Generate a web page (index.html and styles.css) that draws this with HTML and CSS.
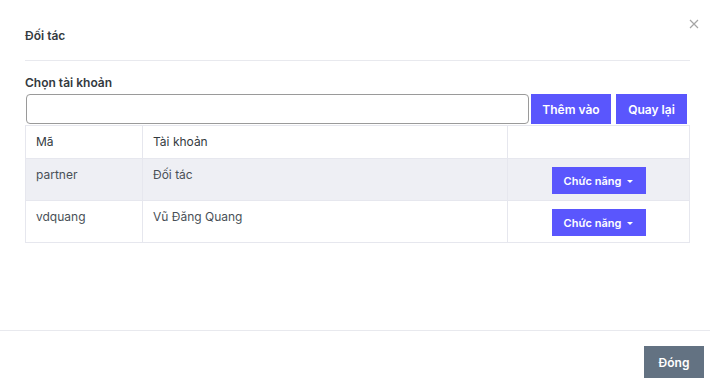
FILE: index.html
```html
<!DOCTYPE html>
<html>

<head>
    <title>Đối tác</title>
    <link rel="stylesheet" href="styles.css">
</head>

<body>
    <div class="modal">
        <button class="close" type="button" aria-label="Close">
            <svg width="10" height="10" viewBox="0 0 10 10">
                <path d="M1 1L9 9M9 1L1 9" stroke="#a5a5a5" stroke-width="1.2" fill="none"/>
            </svg>
        </button>

        <div class="modal-header">
            <h5 class="modal-title">Đối tác</h5>
        </div>

        <div class="modal-body">
            <label class="field-label" for="account">Chọn tài khoản</label>
            <div class="input-row">
                <input type="text" id="account" class="input">
                <button type="button" class="btn btn-primary btn-add">Thêm vào</button>
                <button type="button" class="btn btn-primary btn-back">Quay lại</button>
            </div>

            <table>
                <thead>
                    <tr>
                        <th class="col-code">Mã</th>
                        <th class="col-name">Tài khoản</th>
                        <th class="col-action"></th>
                    </tr>
                </thead>
                <tbody>
                    <tr class="striped">
                        <td>partner</td>
                        <td>Đối tác</td>
                        <td class="cell-action">
                            <button type="button" class="btn btn-primary btn-menu">Chức năng<span class="caret"></span></button>
                        </td>
                    </tr>
                    <tr>
                        <td>vdquang</td>
                        <td>Vũ Đăng Quang</td>
                        <td class="cell-action">
                            <button type="button" class="btn btn-primary btn-menu">Chức năng<span class="caret"></span></button>
                        </td>
                    </tr>
                </tbody>
            </table>
        </div>

        <div class="modal-footer">
            <button type="button" class="btn btn-secondary">Đóng</button>
        </div>
    </div>
</body>

</html>
```

FILE: styles.css
```css
body {
    font-family: Inter, "Noto Sans", sans-serif;
    margin: 0;
    padding: 0;
    background-color: #fff;
    color: #495057;
}

.modal {
    position: relative;
    width: 710px;
    height: 389px;
    display: flex;
    flex-direction: column;
    background-color: #fff;
}

.close {
    position: absolute;
    top: 19px;
    right: 11px;
    border: none;
    background: none;
    padding: 0;
    width: 10px;
    height: 10px;
    cursor: pointer;
}

.close svg {
    display: block;
}

.modal-header {
    margin: 0 20px 0 25px;
    padding: 28px 0 16px;
    border-bottom: 1px solid #e8e9ee;
}

.modal-title {
    margin: 0;
    font-size: 12px;
    line-height: 16px;
    font-weight: 600;
    color: #343a40;
}

.modal-body {
    flex: 1;
    padding: 14px 20px 0 25px;
}

.field-label {
    display: block;
    font-size: 12px;
    line-height: 16px;
    font-weight: 600;
    color: #343a40;
    margin-bottom: 3px;
}

.input-row {
    display: flex;
    margin-bottom: 1px;
}

.input {
    box-sizing: border-box;
    width: 503px;
    height: 30px;
    margin-left: 1px;
    border: 1px solid #9a9a9a;
    border-radius: 4px;
    padding: 4px 8px;
    font-size: 13px;
}

.btn {
    border: none;
    color: #fff;
    font-family: inherit;
    font-size: 12px;
    font-weight: 600;
    cursor: pointer;
    padding: 0;
}

.btn-primary {
    background-color: #5a56fd;
}

.btn-add {
    width: 80px;
    height: 30px;
    margin-left: 2px;
}

.btn-back {
    width: 71px;
    height: 30px;
    margin-left: 5px;
}

table {
    width: 665px;
    border-collapse: collapse;
    font-size: 12px;
    line-height: 16px;
}

th,
td {
    border: 1px solid #e6e7ee;
    padding: 8px 10px;
    text-align: left;
    vertical-align: top;
}

th {
    font-weight: 400;
    color: #343a40;
    height: 16px;
}

.col-code {
    width: 96px;
}

.col-name {
    width: 344px;
}

.striped td {
    background-color: #eeeff4;
}

.cell-action {
    text-align: center;
    padding-bottom: 6px;
}

.btn-menu {
    width: 94px;
    height: 27px;
    font-size: 11px;
}

.caret {
    display: inline-block;
    width: 0;
    height: 0;
    margin-left: 6px;
    vertical-align: middle;
    border-left: 3.5px solid transparent;
    border-right: 3.5px solid transparent;
    border-top: 3.5px solid #fff;
}

.modal-footer {
    border-top: 1px solid #e8e9ee;
    display: flex;
    justify-content: flex-end;
    padding: 15px 6px 11px;
}

.btn-secondary {
    background-color: #637282;
    width: 60px;
    height: 32px;
}
```
